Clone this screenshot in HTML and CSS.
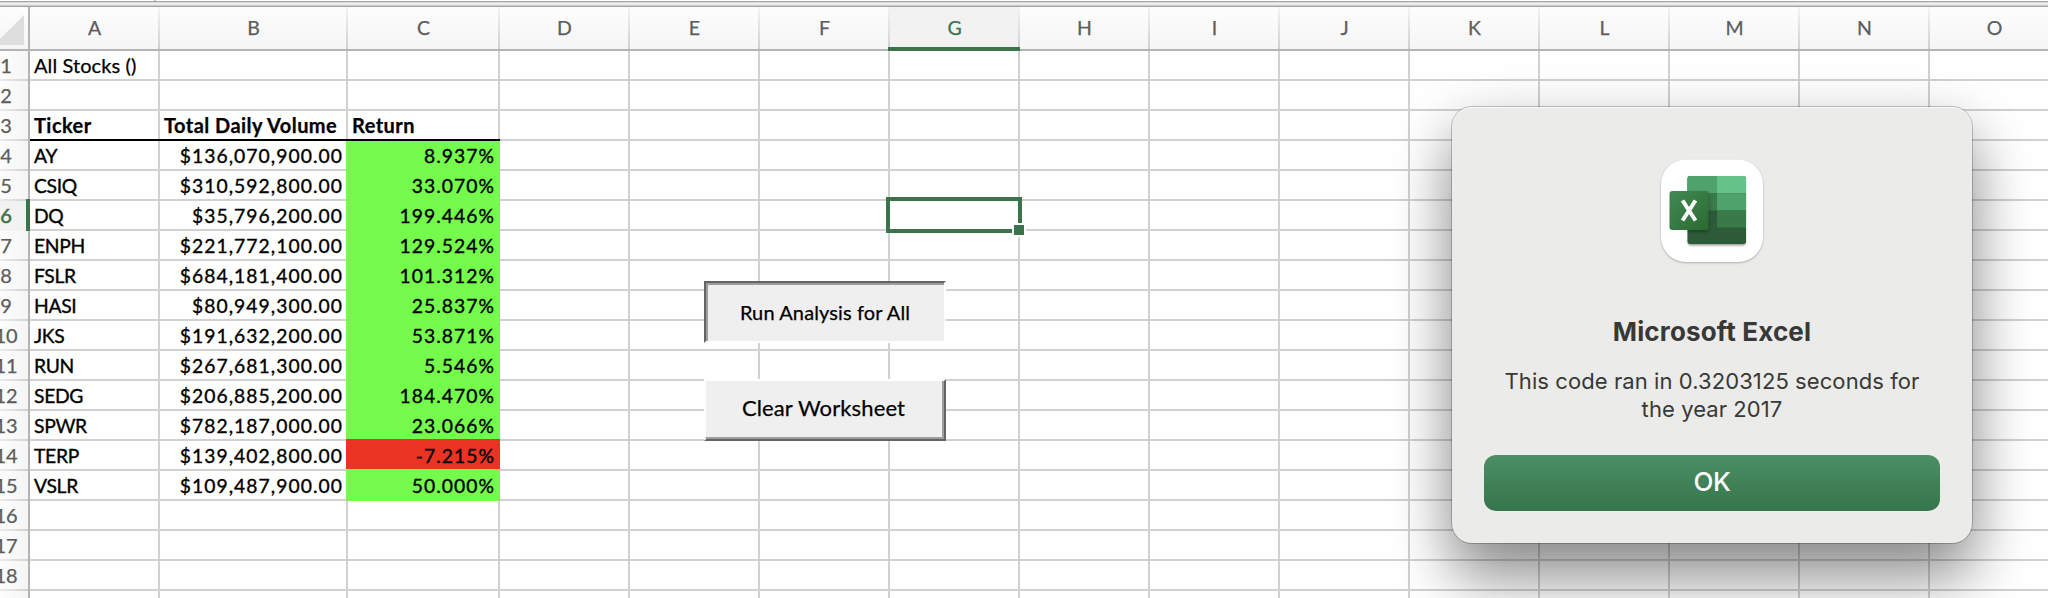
FILE: index.html
```html
<!DOCTYPE html>
<html lang="en">
<head>
<meta charset="utf-8">
<title>All Stocks</title>
<link rel="stylesheet" href="styles.css">
</head>
<body>
<div class="window">
  <div class="strip"><span class="strip-mark"></span></div>
  <div class="row head">
    <div class="corner"><svg width="24" height="30" viewBox="0 0 24 30"><path d="M24 0V30H-6z" fill="#dedede"/></svg></div>
    <div class="col">A</div><div class="col">B</div><div class="col">C</div><div class="col">D</div><div class="col">E</div><div class="col">F</div><div class="col active">G</div><div class="col">H</div><div class="col">I</div><div class="col">J</div><div class="col">K</div><div class="col">L</div><div class="col">M</div><div class="col">N</div><div class="col">O</div>
  </div>
  <div class="row"><div class="num"><b>1</b></div><div class="cell">All Stocks ()</div><div class="cell"></div><div class="cell"></div><div class="rest"></div></div>
  <div class="row"><div class="num"><b>2</b></div><div class="cell"></div><div class="cell"></div><div class="cell"></div><div class="rest"></div></div>
  <div class="row titles"><div class="num"><b>3</b></div><div class="cell">Ticker</div><div class="cell">Total Daily Volume</div><div class="cell">Return</div><div class="rest"></div></div>
  <div class="row"><div class="num"><b>4</b></div><div class="cell k">AY</div><div class="cell n">$136,070,900.00</div><div class="cell n up">8.937%</div><div class="rest"></div></div>
  <div class="row"><div class="num"><b>5</b></div><div class="cell k">CSIQ</div><div class="cell n">$310,592,800.00</div><div class="cell n up">33.070%</div><div class="rest"></div></div>
  <div class="row"><div class="num active"><b>6</b></div><div class="cell k">DQ</div><div class="cell n">$35,796,200.00</div><div class="cell n up">199.446%</div><div class="rest"></div></div>
  <div class="row"><div class="num"><b>7</b></div><div class="cell k">ENPH</div><div class="cell n">$221,772,100.00</div><div class="cell n up">129.524%</div><div class="rest"></div></div>
  <div class="row"><div class="num"><b>8</b></div><div class="cell k">FSLR</div><div class="cell n">$684,181,400.00</div><div class="cell n up">101.312%</div><div class="rest"></div></div>
  <div class="row"><div class="num"><b>9</b></div><div class="cell k">HASI</div><div class="cell n">$80,949,300.00</div><div class="cell n up">25.837%</div><div class="rest"></div></div>
  <div class="row"><div class="num"><b>10</b></div><div class="cell k">JKS</div><div class="cell n">$191,632,200.00</div><div class="cell n up">53.871%</div><div class="rest"></div></div>
  <div class="row"><div class="num"><b>11</b></div><div class="cell k">RUN</div><div class="cell n">$267,681,300.00</div><div class="cell n up">5.546%</div><div class="rest"></div></div>
  <div class="row"><div class="num"><b>12</b></div><div class="cell k">SEDG</div><div class="cell n">$206,885,200.00</div><div class="cell n up">184.470%</div><div class="rest"></div></div>
  <div class="row"><div class="num"><b>13</b></div><div class="cell k">SPWR</div><div class="cell n">$782,187,000.00</div><div class="cell n up">23.066%</div><div class="rest"></div></div>
  <div class="row"><div class="num"><b>14</b></div><div class="cell k">TERP</div><div class="cell n">$139,402,800.00</div><div class="cell n down">-7.215%</div><div class="rest"></div></div>
  <div class="row"><div class="num"><b>15</b></div><div class="cell k">VSLR</div><div class="cell n">$109,487,900.00</div><div class="cell n up">50.000%</div><div class="rest"></div></div>
  <div class="row"><div class="num"><b>16</b></div><div class="cell"></div><div class="cell"></div><div class="cell"></div><div class="rest"></div></div>
  <div class="row"><div class="num"><b>17</b></div><div class="cell"></div><div class="cell"></div><div class="cell"></div><div class="rest"></div></div>
  <div class="row"><div class="num"><b>18</b></div><div class="cell"></div><div class="cell"></div><div class="cell"></div><div class="rest"></div></div>
  <div class="row"><div class="num"></div><div class="cell"></div><div class="cell"></div><div class="cell"></div><div class="rest"></div></div>

  <div class="selection"><span class="handle"></span></div>
  <button class="btn run">Run Analysis for All</button>
  <button class="btn clear">Clear Worksheet</button>

  <div class="dialog">
    <svg class="logo" width="110" height="112" viewBox="0 0 110 112">
      <defs>
        <linearGradient id="tile" x1="0" y1="0" x2="1" y2="1"><stop offset="0" stop-color="#418a54"/><stop offset="1" stop-color="#2b6a31"/></linearGradient>
        <filter id="soft" x="-30%" y="-30%" width="160%" height="160%"><feGaussianBlur stdDeviation="1.2"/></filter>
        <filter id="soft2" x="-30%" y="-30%" width="160%" height="160%"><feGaussianBlur stdDeviation="2.2"/></filter>
        <clipPath id="book"><rect x="30.5" y="21" width="58.5" height="68" rx="2.5"/></clipPath>
      </defs>
      <rect x="4" y="5.5" width="102" height="102.5" rx="25" fill="#000" opacity=".25" filter="url(#soft)"/>
      <rect x="4" y="4.500" width="102" height="102.500" rx="25" fill="#fff"/>
      <rect x="31" y="22.500" width="57.500" height="68" rx="2.500" fill="#000" opacity=".4" filter="url(#soft)"/>
      <g clip-path="url(#book)">
        <rect x="30" y="20" width="60" height="70" fill="#2d5b39"/>
        <rect x="30" y="20" width="30" height="18.500" fill="#50a26c"/>
        <rect x="60" y="20" width="30" height="18.500" fill="#65c289"/>
        <rect x="30" y="38.500" width="30" height="17" fill="#397a49"/>
        <rect x="60" y="38.500" width="30" height="17" fill="#50a26c"/>
        <rect x="60" y="55.500" width="30" height="17" fill="#397a49"/>
        <rect x="14" y="39" width="37" height="37" fill="#000" opacity=".45" filter="url(#soft2)"/>
      </g>
      <rect x="12.500" y="36" width="39" height="39" rx="3" fill="url(#tile)"/>
      <path d="M25.500 45.500L38.500 65.500M38.500 45.500L25.500 65.500" stroke="#fff" stroke-width="4"/>
    </svg>
    <h1>Microsoft Excel</h1>
    <p>This code ran in 0.3203125 seconds for the year 2017</p>
    <button class="ok">OK</button>
  </div>
</div>
</body>
</html>
```
FILE: styles.css
```css
* { box-sizing: border-box; }
body { margin: 0; background: #fff; }
.window {
  position: relative;
  width: 2048px;
  height: 598px;
  overflow: hidden;
  font-family: Lato, Carlito, sans-serif;
  font-size: 20px;
  color: #000;
  -webkit-text-stroke: .25px;
}
.strip {
  height: 7px;
  background: linear-gradient(#fff 0 1px, #a5a5a5 1px 2px, #d8d8d8 2px 3px, #f2f2f2 3px 4px, #e4e4e4 4px 5px, #d0d0d0 5px 6px, #a0a0a0 6px 7px);
}
.strip-mark { display: block; width: 2px; height: 1px; margin-left: 154px; background: #c4c4c4; }
.row {
  display: grid;
  grid-template-columns: 30px 130px 188px 152px 1fr;
  grid-template-rows: 30px;
  height: 30px;
}
.head {
  grid-template-columns: 30px 130px 188px 152px repeat(12, 130px);
  grid-template-rows: 42px;
  height: 44px;
  background: linear-gradient(#fdfdfd, #f5f5f5);
  border-bottom: 2px solid #b4b4b4;
}
.corner { border-right: 2px solid #b4b4b4; padding-top: 8px; }
.corner svg { display: block; }
.col {
  display: flex;
  align-items: center;
  justify-content: center;
  height: 42px;
  padding: 0 0 1px 1px;
  font-size: 19.5px;
  color: #5c5c5c;
  border-right: 2px solid;
  border-image: linear-gradient(#f4f4f4, #cfcfcf) 1;
}
.col.active {
  color: #3b734b;
  background: #f2f2f2;
  position: relative;
}
.col.active::after {
  content: "";
  position: absolute;
  left: -2px;
  right: -2px;
  bottom: -2px;
  height: 4px;
  background: #3b734b;
}
.num {
  position: relative;
  overflow: hidden;
  border-right: 2px solid #b4b4b4;
  background: linear-gradient(90deg, #ececec, #d0d0d0) bottom / 100% 2px no-repeat, linear-gradient(90deg, #fdfdfd, #f5f5f5);
}
.num b {
  display: flex;
  justify-content: center;
  width: 46px;
  margin-left: -17px;
  font-weight: 400;
  line-height: 29px;
  color: #5c5c5c;
}
.num.active { overflow: visible; background: #f2f2f2; }
.num.active b { color: #3b734b; -webkit-text-stroke: .6px; }
.num.active::after {
  content: "";
  position: absolute;
  top: -2px;
  bottom: 0;
  right: -2px;
  width: 4px;
  background: #3b734b;
}
.cell {
  padding-left: 4px;
  line-height: 29px;
  white-space: nowrap;
  border-right: 2px solid #d1d1d1;
  border-bottom: 2px solid #d1d1d1;
  letter-spacing: .1px;
}
.k { font-size: 19.3px; letter-spacing: -.3px; -webkit-text-stroke: .35px; }
.n { padding: 0 3px 0 0; text-align: right; font-size: 19.3px; letter-spacing: 1.05px; -webkit-text-stroke: .35px; }
.up { background: #75fb4c; border-color: #75fb4c; box-shadow: -2px 0 #75fb4c, 0 -2px #75fb4c, -2px -2px #75fb4c; }
.down { background: #ea3323; border-color: #ea3323; box-shadow: -2px 0 #ea3323, 0 -2px #ea3323, -2px -2px #ea3323; }
.titles { position: relative; }
.titles .cell { font-weight: 700; letter-spacing: .45px; border-bottom: 0; }
.titles::after {
  content: "";
  position: absolute;
  left: 30px;
  bottom: 0;
  width: 470px;
  height: 2px;
  background: #000;
  z-index: 1;
}
.rest {
  border-bottom: 2px solid #d1d1d1;
  background: repeating-linear-gradient(90deg, transparent 0 128px, #d1d1d1 128px 130px);
}
.selection {
  position: absolute;
  left: 886px;
  top: 197px;
  width: 136px;
  height: 36px;
  border: 4px solid #3b734b;
}
.handle {
  position: absolute;
  right: -8px;
  bottom: -8px;
  width: 14px;
  height: 14px;
  border: 2px solid #fff;
  background: #3b734b;
}
.btn {
  position: absolute;
  left: 704px;
  width: 242px;
  height: 62px;
  padding: 0 0 1px;
  background: #efefef;
  border: 2px solid #fff;
  font: 20px Lato, sans-serif;
  letter-spacing: .12px;
  color: #000;
  white-space: nowrap;
  -webkit-text-stroke: .25px;
}
.run { top: 281px; border-color: #646464 #fff #fff #646464; box-shadow: inset 2px 2px #9d9d9d; }
.clear { top: 379px; padding: 0 3px 5px 0; border-color: #fff #646464 #646464 #fff; box-shadow: inset -2px -2px #9d9d9d; font-size: 22px; }
.dialog {
  position: absolute;
  left: 1452px;
  top: 107px;
  width: 520px;
  height: 436px;
  display: flex;
  flex-direction: column;
  align-items: center;
  padding: 48px 32px 32px;
  border-radius: 20px;
  background: #ebebe9;
  box-shadow: 0 0 0 1px rgba(0,0,0,.22), inset 0 1px 1px rgba(255,255,255,.7), 0 36px 60px rgba(0,0,0,.4), 0 8px 60px rgba(0,0,0,.12);
  font-family: Inter, sans-serif;
  color: #383836;
  -webkit-text-stroke: 0;
}
.logo { flex: none; }
.dialog h1 { margin: 49px 0 0; font-size: 26px; line-height: 32px; font-weight: 700; letter-spacing: .15px; }
.dialog p { margin: 19px 0 0; width: 440px; font-size: 22px; line-height: 28px; letter-spacing: .08px; text-align: center; }
.ok {
  width: 456px;
  height: 56px;
  margin-top: auto;
  padding: 0 0 3px;
  border: 0;
  border-radius: 12px;
  background: linear-gradient(#4c8e66, #35754a);
  color: #fff;
  font: 500 26px Inter, sans-serif;
  letter-spacing: -.4px;
}
```
